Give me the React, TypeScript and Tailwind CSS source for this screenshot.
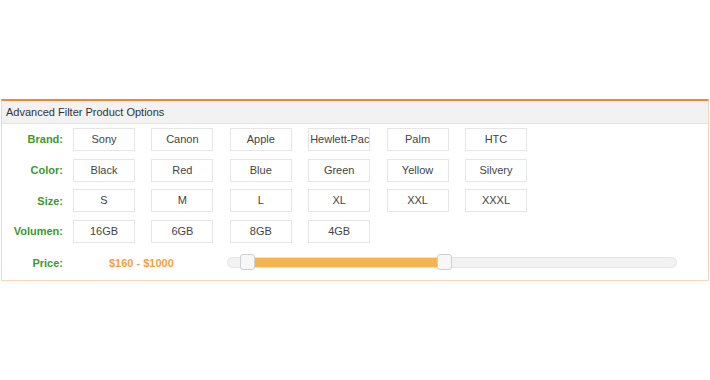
import React from "react";

const rows: { label: string; items: string[] }[] = [
  { label: "Brand:", items: ["Sony", "Canon", "Apple", "Hewlett-Pac", "Palm", "HTC"] },
  { label: "Color:", items: ["Black", "Red", "Blue", "Green", "Yellow", "Silvery"] },
  { label: "Size:", items: ["S", "M", "L", "XL", "XXL", "XXXL"] },
  { label: "Volumen:", items: ["16GB", "6GB", "8GB", "4GB"] },
];

export default function App() {
  return (
    <div
      className="w-[710px] h-[380px] bg-white pt-[99px]"
      style={{ fontFamily: '"Liberation Sans", Arial, sans-serif' }}
    >
      <div className="ml-[1px] w-[708px] border border-t-2 border-[#f6d5bf] border-t-[#e98a3a] bg-white">
        <div className="h-[23px] bg-[#f2f2f2] border-b border-[#e2e2e2] pl-[4px] flex items-center text-[11px] text-[#333]">
          Advanced Filter Product Options
        </div>
        <div className="pt-[4px] pb-[5px] flex flex-col gap-[7.7px]">
          {rows.map((r) => (
            <div key={r.label} className="flex items-center gap-[10px]">
              <div className="w-[61px] text-right text-[11px] font-bold text-[#3a9a2c]">{r.label}</div>
              <div className="flex gap-[16.4px]">
                {r.items.map((it) => (
                  <div
                    key={it}
                    className="w-[62px] h-[23px] border border-[#e6e6e6] bg-white text-[11px] text-[#444] text-center leading-[21px] whitespace-nowrap px-[1px]"
                  >
                    {it}
                  </div>
                ))}
              </div>
            </div>
          ))}
          <div className="flex items-center gap-[10px] h-[24px]">
            <div className="w-[61px] text-right text-[11px] font-bold text-[#3a9a2c]">Price:</div>
            <div className="w-[144px] pl-[36px] text-[11px] font-bold text-[#f2a23c]">$160 - $1000</div>
            <div className="relative w-[450px] h-[11px] rounded-full bg-[#f2f2f2] border border-[#e3e3e3]">
              <div className="absolute top-0 bottom-0 left-[20px] w-[197px] bg-[#f4b44f]" />
              <div className="absolute top-[-4px] left-[12px] w-[15px] h-[16px] rounded-[3px] bg-[#f7f7f7] border border-[#cfcfcf]" />
              <div className="absolute top-[-4px] left-[209px] w-[15px] h-[16px] rounded-[3px] bg-[#f7f7f7] border border-[#cfcfcf]" />
            </div>
          </div>
        </div>
      </div>
    </div>
  );
}
